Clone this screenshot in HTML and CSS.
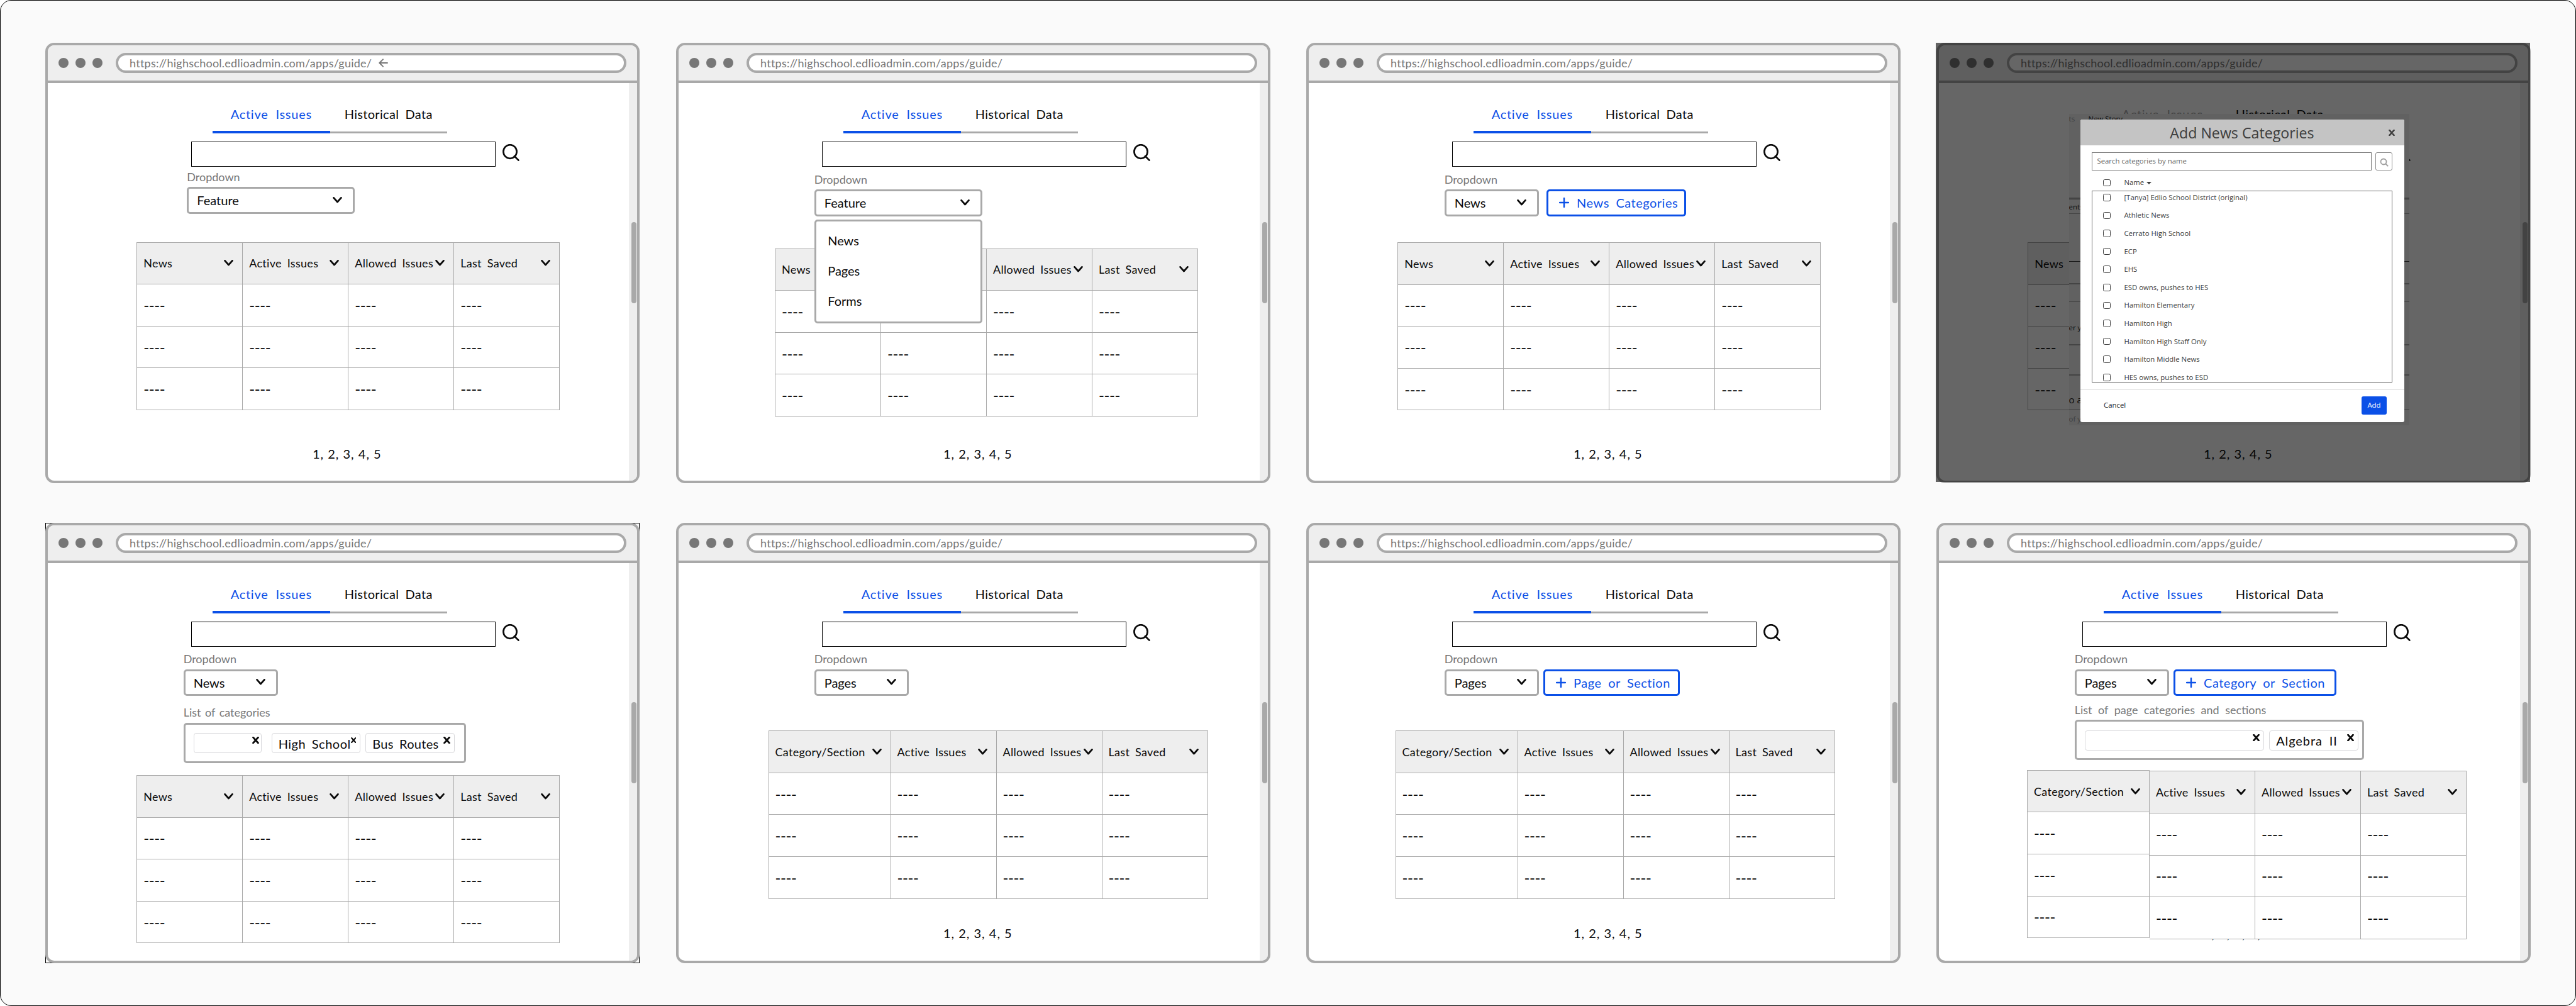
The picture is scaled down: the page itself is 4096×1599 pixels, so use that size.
FILE: index.html
```html
<!DOCTYPE html>
<html lang="en">
<head>
    <meta charset="UTF-8">
    <title>Issues Wireframes</title>
    <link rel="stylesheet" href="styles.css">
</head>
<body>
    <!-- shared icons -->
    <svg class="sprite">
        <symbol id="chevron" viewBox="0 0 15 10"><path d="M1.6 1.4 7.5 8 13.4 1.4" fill="none" stroke="currentColor" stroke-width="2.8" stroke-linecap="round" stroke-linejoin="round"/></symbol>
        <symbol id="search" viewBox="0 0 27 27"><ellipse cx="12" cy="12" rx="10.6" ry="10.8" fill="none" stroke="currentColor" stroke-width="2.7"/><path d="M19 19.3 25.4 25.6" stroke="currentColor" stroke-width="2.7" stroke-linecap="round"/></symbol>
        <symbol id="plus" viewBox="0 0 16 16"><path d="M8 1v14M1 8h14" stroke="currentColor" stroke-width="2.4" stroke-linecap="round"/></symbol>
        <symbol id="close" viewBox="0 0 11 11"><path d="M1.5 1 9.5 10M9.5 1 1.5 10" stroke="currentColor" stroke-width="2.7" stroke-linecap="round"/></symbol>
        <symbol id="back" viewBox="0 0 15 14"><path d="M14 7H1.5M7 1.3 1.3 7 7 12.7" fill="none" stroke="currentColor" stroke-width="1.9" stroke-linecap="round" stroke-linejoin="round"/></symbol>
    </svg>

    <main class="board">

        <!-- 1. Feature -->
        <section class="window">
            <header class="topbar">
                <i class="dot"></i><i class="dot"></i><i class="dot"></i>
                <div class="url"><span>https://highschool.edlioadmin.com/apps/guide/</span><svg class="back"><use href="#back"/></svg></div>
            </header>
            <div class="page page-feature">
                <nav class="tabs"><a class="tab active">Active Issues</a><a class="tab">Historical Data</a></nav>
                <div class="search"><div class="search-input"></div><svg><use href="#search"/></svg></div>
                <div class="field">
                    <div class="label">Dropdown</div>
                    <div class="row"><div class="select wide"><span>Feature</span><svg><use href="#chevron"/></svg></div></div>
                </div>
                <div class="issues">
                    <div class="head"><span>News</span><svg><use href="#chevron"/></svg></div>
                    <div class="head"><span>Active Issues</span><svg><use href="#chevron"/></svg></div>
                    <div class="head"><span>Allowed Issues</span><svg><use href="#chevron"/></svg></div>
                    <div class="head"><span>Last Saved</span><svg><use href="#chevron"/></svg></div>
                    <div>----</div><div>----</div><div>----</div><div>----</div>
                    <div>----</div><div>----</div><div>----</div><div>----</div>
                    <div>----</div><div>----</div><div>----</div><div>----</div>
                </div>
                <div class="pages">1, 2, 3, 4, 5</div>
            </div>
            <div class="scrollbar"><div class="thumb"></div></div>
        </section>

        <!-- 2. Feature, menu open -->
        <section class="window">
            <header class="topbar">
                <i class="dot"></i><i class="dot"></i><i class="dot"></i>
                <div class="url"><span>https://highschool.edlioadmin.com/apps/guide/</span></div>
            </header>
            <div class="page page-menu">
                <nav class="tabs"><a class="tab active">Active Issues</a><a class="tab">Historical Data</a></nav>
                <div class="search"><div class="search-input"></div><svg><use href="#search"/></svg></div>
                <div class="field">
                    <div class="label">Dropdown</div>
                    <div class="row">
                        <div class="select wide"><span>Feature</span><svg><use href="#chevron"/></svg></div>
                        <div class="menu">
                            <div>News</div>
                            <div>Pages</div>
                            <div>Forms</div>
                        </div>
                    </div>
                </div>
                <div class="issues">
                    <div class="head"><span>News</span></div>
                    <div class="head"></div>
                    <div class="head"><span>Allowed Issues</span><svg><use href="#chevron"/></svg></div>
                    <div class="head"><span>Last Saved</span><svg><use href="#chevron"/></svg></div>
                    <div>----</div><div></div><div>----</div><div>----</div>
                    <div>----</div><div>----</div><div>----</div><div>----</div>
                    <div>----</div><div>----</div><div>----</div><div>----</div>
                </div>
                <div class="pages">1, 2, 3, 4, 5</div>
            </div>
            <div class="scrollbar"><div class="thumb"></div></div>
        </section>

        <!-- 3. News -->
        <section class="window">
            <header class="topbar">
                <i class="dot"></i><i class="dot"></i><i class="dot"></i>
                <div class="url"><span>https://highschool.edlioadmin.com/apps/guide/</span></div>
            </header>
            <div class="page page-news">
                <nav class="tabs"><a class="tab active">Active Issues</a><a class="tab">Historical Data</a></nav>
                <div class="search"><div class="search-input"></div><svg><use href="#search"/></svg></div>
                <div class="field">
                    <div class="label">Dropdown</div>
                    <div class="row">
                        <div class="select"><span>News</span><svg><use href="#chevron"/></svg></div>
                        <div class="add add-news"><svg><use href="#plus"/></svg><span>News Categories</span></div>
                    </div>
                </div>
                <div class="issues">
                    <div class="head"><span>News</span><svg><use href="#chevron"/></svg></div>
                    <div class="head"><span>Active Issues</span><svg><use href="#chevron"/></svg></div>
                    <div class="head"><span>Allowed Issues</span><svg><use href="#chevron"/></svg></div>
                    <div class="head"><span>Last Saved</span><svg><use href="#chevron"/></svg></div>
                    <div>----</div><div>----</div><div>----</div><div>----</div>
                    <div>----</div><div>----</div><div>----</div><div>----</div>
                    <div>----</div><div>----</div><div>----</div><div>----</div>
                </div>
                <div class="pages">1, 2, 3, 4, 5</div>
            </div>
            <div class="scrollbar"><div class="thumb"></div></div>
        </section>

        <!-- 4. Add News Categories modal -->
        <section class="window">
            <header class="topbar">
                <i class="dot"></i><i class="dot"></i><i class="dot"></i>
                <div class="url"><span>https://highschool.edlioadmin.com/apps/guide/</span></div>
            </header>
            <div class="page page-modal">
                <nav class="tabs"><a class="tab active">Active Issues</a><a class="tab">Historical Data</a></nav>
                <div class="search"><div class="search-input"></div><svg><use href="#search"/></svg></div>
                <div class="issues">
                    <div class="head"><span>News</span></div>
                    <div>----</div>
                    <div>----</div>
                    <div>----</div>
                </div>
                <div class="pages">1, 2, 3, 4, 5</div>
            </div>
            <div class="scrollbar"><div class="thumb"></div></div>
            <div class="overlay"></div>
            <div class="backdrop">
                <div class="strip s-top"><span class="muted">ts</span><span class="story">New Story</span></div>
                <div class="strip s-line"></div>
                <div class="strip s-ents">ents</div>
                <div class="strip s-a"></div>
                <div class="strip s-b"></div>
                <div class="strip s-c"></div>
                <div class="strip s-er">er y</div>
                <div class="strip s-d"></div>
                <div class="strip s-oa">o a</div>
                <div class="strip s-of">of y</div>
            </div>
            <div class="modal">
                <div class="modal-head"><h2>Add News Categories</h2><svg><use href="#close"/></svg></div>
                <div class="modal-body">
                    <div class="modal-search">
                        <div class="modal-input">Search categories by name</div>
                        <div class="modal-go"><svg viewBox="0 0 14 14"><circle cx="6" cy="6" r="4.5" fill="none" stroke="#a0a0a0" stroke-width="1.8"/><path d="M9.5 9.5 12.6 12.6" stroke="#a0a0a0" stroke-width="2" stroke-linecap="round"/></svg></div>
                    </div>
                    <div class="item item-head"><i class="box"></i>Name<i class="caret"></i></div>
                    <div class="list">
                        <div class="item"><i class="box"></i>[Tanya] Edlio School District (original)</div>
                        <div class="item"><i class="box"></i>Athletic News</div>
                        <div class="item"><i class="box"></i>Cerrato High School</div>
                        <div class="item"><i class="box"></i>ECP</div>
                        <div class="item"><i class="box"></i>EHS</div>
                        <div class="item"><i class="box"></i>ESD owns, pushes to HES</div>
                        <div class="item"><i class="box"></i>Hamilton Elementary</div>
                        <div class="item"><i class="box"></i>Hamilton High</div>
                        <div class="item"><i class="box"></i>Hamilton High Staff Only</div>
                        <div class="item"><i class="box"></i>Hamilton Middle News</div>
                        <div class="item"><i class="box"></i>HES owns, pushes to ESD</div>
                    </div>
                </div>
                <div class="modal-foot"><span>Cancel</span><span class="modal-add">Add</span></div>
            </div>
        </section>

        <!-- 5. News with categories -->
        <section class="window selected">
            <header class="topbar">
                <i class="dot"></i><i class="dot"></i><i class="dot"></i>
                <div class="url"><span>https://highschool.edlioadmin.com/apps/guide/</span></div>
            </header>
            <div class="page page-news-list">
                <nav class="tabs"><a class="tab active">Active Issues</a><a class="tab">Historical Data</a></nav>
                <div class="search"><div class="search-input"></div><svg><use href="#search"/></svg></div>
                <div class="field">
                    <div class="label">Dropdown</div>
                    <div class="row"><div class="select"><span>News</span><svg><use href="#chevron"/></svg></div></div>
                </div>
                <div class="field chosen">
                    <div class="label">List of categories</div>
                    <div class="chips chips-news">
                        <div class="chip chip-empty"><svg><use href="#close"/></svg></div>
                        <div class="chip chip-tight"><span>High School</span><svg><use href="#close"/></svg></div>
                        <div class="chip"><span>Bus Routes</span><svg><use href="#close"/></svg></div>
                    </div>
                </div>
                <div class="issues">
                    <div class="head"><span>News</span><svg><use href="#chevron"/></svg></div>
                    <div class="head"><span>Active Issues</span><svg><use href="#chevron"/></svg></div>
                    <div class="head"><span>Allowed Issues</span><svg><use href="#chevron"/></svg></div>
                    <div class="head"><span>Last Saved</span><svg><use href="#chevron"/></svg></div>
                    <div>----</div><div>----</div><div>----</div><div>----</div>
                    <div>----</div><div>----</div><div>----</div><div>----</div>
                    <div>----</div><div>----</div><div>----</div><div>----</div>
                </div>
            </div>
            <div class="scrollbar"><div class="thumb"></div></div>
        </section>

        <!-- 6. Pages -->
        <section class="window">
            <header class="topbar">
                <i class="dot"></i><i class="dot"></i><i class="dot"></i>
                <div class="url"><span>https://highschool.edlioadmin.com/apps/guide/</span></div>
            </header>
            <div class="page page-pages">
                <nav class="tabs"><a class="tab active">Active Issues</a><a class="tab">Historical Data</a></nav>
                <div class="search"><div class="search-input"></div><svg><use href="#search"/></svg></div>
                <div class="field">
                    <div class="label">Dropdown</div>
                    <div class="row"><div class="select"><span>Pages</span><svg><use href="#chevron"/></svg></div></div>
                </div>
                <div class="issues sections">
                    <div class="head"><span>Category/Section</span><svg><use href="#chevron"/></svg></div>
                    <div class="head"><span>Active Issues</span><svg><use href="#chevron"/></svg></div>
                    <div class="head"><span>Allowed Issues</span><svg><use href="#chevron"/></svg></div>
                    <div class="head"><span>Last Saved</span><svg><use href="#chevron"/></svg></div>
                    <div>----</div><div>----</div><div>----</div><div>----</div>
                    <div>----</div><div>----</div><div>----</div><div>----</div>
                    <div>----</div><div>----</div><div>----</div><div>----</div>
                </div>
                <div class="pages">1, 2, 3, 4, 5</div>
            </div>
            <div class="scrollbar"><div class="thumb"></div></div>
        </section>

        <!-- 7. Pages, add page or section -->
        <section class="window">
            <header class="topbar">
                <i class="dot"></i><i class="dot"></i><i class="dot"></i>
                <div class="url"><span>https://highschool.edlioadmin.com/apps/guide/</span></div>
            </header>
            <div class="page page-pages page-add">
                <nav class="tabs"><a class="tab active">Active Issues</a><a class="tab">Historical Data</a></nav>
                <div class="search"><div class="search-input"></div><svg><use href="#search"/></svg></div>
                <div class="field">
                    <div class="label">Dropdown</div>
                    <div class="row">
                        <div class="select"><span>Pages</span><svg><use href="#chevron"/></svg></div>
                        <div class="add add-page"><svg><use href="#plus"/></svg><span>Page or Section</span></div>
                    </div>
                </div>
                <div class="issues sections">
                    <div class="head"><span>Category/Section</span><svg><use href="#chevron"/></svg></div>
                    <div class="head"><span>Active Issues</span><svg><use href="#chevron"/></svg></div>
                    <div class="head"><span>Allowed Issues</span><svg><use href="#chevron"/></svg></div>
                    <div class="head"><span>Last Saved</span><svg><use href="#chevron"/></svg></div>
                    <div>----</div><div>----</div><div>----</div><div>----</div>
                    <div>----</div><div>----</div><div>----</div><div>----</div>
                    <div>----</div><div>----</div><div>----</div><div>----</div>
                </div>
                <div class="pages">1, 2, 3, 4, 5</div>
            </div>
            <div class="scrollbar"><div class="thumb"></div></div>
        </section>

        <!-- 8. Pages with categories and sections -->
        <section class="window">
            <header class="topbar">
                <i class="dot"></i><i class="dot"></i><i class="dot"></i>
                <div class="url"><span>https://highschool.edlioadmin.com/apps/guide/</span></div>
            </header>
            <div class="page page-pages-list">
                <nav class="tabs"><a class="tab active">Active Issues</a><a class="tab">Historical Data</a></nav>
                <div class="search"><div class="search-input"></div><svg><use href="#search"/></svg></div>
                <div class="field">
                    <div class="label">Dropdown</div>
                    <div class="row">
                        <div class="select"><span>Pages</span><svg><use href="#chevron"/></svg></div>
                        <div class="add add-category"><svg><use href="#plus"/></svg><span>Category or Section</span></div>
                    </div>
                </div>
                <div class="field chosen">
                    <div class="label label-long">List of page categories and sections</div>
                    <div class="chips chips-pages">
                        <div class="chip chip-long"><svg><use href="#close"/></svg></div>
                        <div class="chip chip-algebra"><span>Algebra II</span><svg><use href="#close"/></svg></div>
                    </div>
                </div>
                <div class="split">
                    <div class="issues col-category">
                        <div class="head"><span>Category/Section</span><svg><use href="#chevron"/></svg></div>
                        <div>----</div>
                        <div>----</div>
                        <div>----</div>
                    </div>
                    <div class="issues col-rest">
                        <div class="head"><span>Active Issues</span><svg><use href="#chevron"/></svg></div>
                        <div class="head"><span>Allowed Issues</span><svg><use href="#chevron"/></svg></div>
                        <div class="head"><span>Last Saved</span><svg><use href="#chevron"/></svg></div>
                        <div>----</div><div>----</div><div>----</div>
                        <div>----</div><div>----</div><div>----</div>
                        <div>----</div><div>----</div><div>----</div>
                    </div>
                </div>
                <div class="pages">1, 2, 3, 4, 5</div>
            </div>
            <div class="scrollbar"><div class="thumb"></div></div>
        </section>

    </main>
</body>
</html>
```
FILE: styles.css
```css
* {
    margin: 0;
    padding: 0;
    box-sizing: border-box;
}

body {
    font-family: Lato, sans-serif;
    font-size: 20px;
    line-height: 24px;
    color: #0a0a0a;
    background-color: #fff;
    white-space: nowrap;
}

.sprite {
    display: none;
}

.board {
    position: relative;
    z-index: 0;
    width: 4096px;
    height: 1599px;
    padding: 67px 0 0 71px;
    border: 1px solid #000;
    border-radius: 18px;
    background-color: #fafafa;
    display: grid;
    grid-template-columns: 1003px 1002px 1002px 945px;
    grid-template-rows: 762.5px 700px;
}

/* browser window */
.window {
    position: relative;
    width: 945px;
    height: 700px;
    border: 4px solid #a9a9a9;
    border-radius: 14px;
    background-color: #fff;
    display: grid;
    grid-template-columns: 924px 13px;
    grid-template-rows: 60px 632px;
}

/* square selection frame behind the rounded corners */
.selected::before {
    content: "";
    position: absolute;
    inset: -4px;
    border: 1px solid #000;
    z-index: -1;
}

.topbar {
    grid-column: 1 / 3;
    display: flex;
    align-items: center;
    gap: 10.7px;
    padding-left: 17.3px;
    border-bottom: 4px solid #a9a9a9;
    border-radius: 10px 10px 0 0;
    background-color: #eee;
}

.dot {
    width: 16px;
    height: 16px;
    border-radius: 50%;
    background-color: #777;
}

.url {
    width: 812px;
    height: 32px;
    margin-left: 10.7px;
    padding-left: 18px;
    border: 4px solid #a9a9a9;
    border-radius: 16px;
    background-color: #fff;
    display: flex;
    align-items: center;
    font-size: 18px;
    letter-spacing: 0.25px;
    color: #777;
}

.back {
    width: 15px;
    height: 14px;
    margin-left: 11px;
}

.page {
    display: flex;
    flex-direction: column;
    align-items: flex-start;
}

.scrollbar {
    background-color: #eee;
    border-radius: 0 0 10px 0;
    padding: 221px 0 0 4px;
}

.thumb {
    width: 8px;
    height: 129px;
    border-radius: 4px;
    background-color: #a9a9a9;
}

/* tabs */
.tabs {
    display: flex;
    align-items: flex-end;
    width: 373px;
    margin: 37px 0 0 262px;
    line-height: 22px;
}

.tab {
    width: 50%;
    height: 42px;
    text-align: center;
    border-bottom: 3px solid #a9a9a9;
    letter-spacing: 0.3px;
    word-spacing: 5px;
}

.tab.active {
    height: 43px;
    padding-top: 1px;
    color: #0b50e7;
    border-bottom: 4px solid #0b50e7;
    letter-spacing: 0.75px;
    word-spacing: 6px;
}

.search {
    display: flex;
    gap: 11px;
    margin: 13px 0 0 228px;
}

.search-input {
    width: 484px;
    height: 40px;
    border: 1px solid #000;
}

.search svg {
    width: 27px;
    height: 27px;
    margin-top: 4px;
}

/* dropdown */
.field {
    margin: 9.5px 0 0 215.7px;
}

.label {
    margin-bottom: 6.5px;
    font-size: 18px;
    line-height: 20px;
    color: #777;
    word-spacing: 2px;
}

.label-long {
    word-spacing: 5px;
}

.row {
    position: relative;
    display: flex;
    gap: 7.4px;
}

.select,
.add {
    height: 42.7px;
    border: 3px solid #a9a9a9;
    border-radius: 5px;
    background-color: #fff;
    display: flex;
    align-items: center;
}

.select {
    width: 150px;
    padding: 0 17px 0 13px;
    justify-content: space-between;
}

.select.wide {
    width: 267px;
}

.select svg,
.head svg {
    width: 15px;
    height: 10px;
}

.select svg {
    margin-top: -1px;
}

.add {
    gap: 12.5px;
    padding-left: 16.5px;
    border-color: #0b50e7;
    color: #0b50e7;
    letter-spacing: 0.5px;
    word-spacing: 5px;
}

.add svg {
    width: 16px;
    height: 16px;
}

.add-news {
    width: 222px;
    margin-left: 5px;
}

.add-page {
    width: 217px;
}

.add-category {
    width: 259px;
}

.menu {
    position: absolute;
    left: 0;
    top: 48.3px;
    z-index: 2;
    width: 267px;
    height: 164.5px;
    padding: 17.5px 0 0 18.5px;
    border: 3px solid #a9a9a9;
    border-radius: 5px;
    background-color: #fff;
}

.menu div {
    height: 48px;
}

/* chosen categories */
.chips {
    height: 64px;
    padding: 13.5px 0 0 13.5px;
    border: 3px solid #a9a9a9;
    border-radius: 5px;
    display: flex;
    gap: 8px;
}

.chips-news {
    width: 449.4px;
}

.chips-pages {
    width: 460px;
}

.chip {
    width: 141.5px;
    height: 32px;
    padding: 1px 6px 0 10px;
    border: 1px solid #d9d9dc;
    border-radius: 4px;
    display: flex;
    justify-content: space-between;
    align-items: center;
    letter-spacing: 0.3px;
    word-spacing: 4px;
}

.chip svg {
    width: 11px;
    height: 11px;
    margin: -10px 0 0 auto;
}

.chip-tight {
    letter-spacing: 0.5px;
}

.chip-algebra {
    letter-spacing: 0.9px;
    word-spacing: 5px;
}

.chip-empty {
    width: 108px;
    padding-right: 3px;
    margin-right: 7.5px;
}

.chip-long {
    width: 285px;
}

/* issues table */
.issues {
    position: relative;
    z-index: 1;
    display: grid;
    grid-template-columns: repeat(4, 168px);
    grid-auto-rows: 66.6px;
    margin-left: 141.2px;
    border: solid #a9a9a9;
    border-width: 1px 0 0 1px;
    background-color: #fff;
    font-size: 24px;
}

.issues div {
    display: flex;
    align-items: center;
    padding: 0 0 0 10px;
    border: solid #a9a9a9;
    border-width: 0 1px 1px 0;
    letter-spacing: -0.4px;
}

.issues .head {
    justify-content: space-between;
    padding: 0 14px 0 10px;
    background-color: #eee;
    font-size: 18px;
    letter-spacing: 0.3px;
    word-spacing: 4px;
}

.head svg {
    flex: none;
}

.issues.sections {
    grid-template-columns: 194px repeat(3, 168px);
}

.split {
    display: flex;
    position: relative;
    z-index: 1;
}

.issues.col-category {
    grid-template-columns: 194px;
    margin: 0;
    align-self: flex-start;
}

.issues.col-rest {
    grid-template-columns: repeat(3, 168px);
    margin: 1.5px 0 0 0;
    border-left: 0;
}

.pages {
    margin: auto auto 31.5px 421px;
    letter-spacing: 1px;
}

/* per screen spacing */
.page-feature .field { margin: 5.5px 0 0 221.3px; }
.page-feature .issues { margin-top: 45px; }
.page-menu .issues { margin: 51px 0 0 153px; }
.page-news .issues { margin-top: 41.3px; }
.page-modal .issues { margin-top: 120px; grid-template-columns: 168px; }
.page-modal .tab.active { color: #aaa; }
.page-news-list .chosen { margin-top: 16.3px; }
.page-news-list .issues { margin-top: 19px; }
.page-pages .issues { margin: 55px 0 0 142.5px; }
.page-add .issues { margin-left: 137.5px; }
.page-pages-list .chosen { margin-top: 11.7px; }
.page-pages-list .split { margin: 15.5px 0 0 140px; }
.page-pages-list .pages { margin-top: -21px; margin-bottom: 0; }

/* dimmed screen */
.overlay {
    position: absolute;
    left: -5px;
    top: -4px;
    width: 945px;
    height: 698px;
    z-index: 2;
    background-color: rgba(0, 0, 0, 0.6);
}

.backdrop {
    position: absolute;
    left: 206.6px;
    top: 109.3px;
    z-index: 3;
    width: 541px;
    height: 495px;
    overflow: hidden;
    background-color: #616161;
    font-family: "Open Sans", sans-serif;
    font-size: 11.4px;
    line-height: 14px;
    color: #0a0a0a;
}

.strip {
    border: 0 solid #444;
}

.s-top { display: flex; height: 133px; padding-top: 1px; }
.s-top .muted { width: 31px; color: #3c3c3c; }
.s-line { height: 4px; border-width: 2px 0 1px; }
.s-ents { height: 22px; padding-top: 4px; border-bottom-width: 1px; }
.s-a { height: 76px; border-bottom: 1px solid #111; }
.s-b { height: 36px; border-bottom-width: 2px; }
.s-c { height: 28px; border-bottom-width: 1px; }
.s-er { height: 69px; padding-top: 34px; border-bottom-width: 2px; }
.s-d { height: 48px; border-bottom-width: 2px; }
.s-oa { height: 54px; padding-top: 31px; border-bottom-width: 1px; font-size: 15px; }
.s-of { padding-top: 8px; color: #3c3c3c; }

.modal {
    position: absolute;
    left: 225px;
    top: 118.3px;
    z-index: 4;
    width: 514.5px;
    height: 481px;
    border-radius: 3px;
    overflow: hidden;
    background-color: #fff;
    font-family: "Open Sans", sans-serif;
    font-size: 11.4px;
    line-height: 16px;
    color: #3d3d3d;
}

.modal-head {
    display: flex;
    align-items: center;
    height: 40.7px;
    padding: 0 14.5px 0 24px;
    background-color: #c4c4c4;
}

.modal-head h2 {
    flex: 1;
    text-align: center;
    font-size: 23.2px;
    font-weight: 400;
    line-height: 32px;
}

.modal-head svg {
    width: 10px;
    height: 10px;
}

.modal-body {
    height: 388px;
    padding: 11.3px 18.8px 0 18.4px;
    border-bottom: 1px solid #ccc;
}

.modal-search {
    display: flex;
    gap: 5.7px;
}

.modal-input {
    width: 444.6px;
    height: 28.3px;
    padding: 5px 0 0 7px;
    border: 1px solid #7a7a7a;
    color: #666;
}

.modal-go {
    width: 27px;
    height: 28.7px;
    padding: 8px 0 0 6px;
    border: 1px solid #8a8a8a;
    border-radius: 3px;
}

.modal-go svg {
    display: block;
    width: 14px;
    height: 14px;
}

.item {
    display: flex;
    align-items: center;
    height: 28.6px;
    padding-left: 17px;
}

.item-head {
    margin-top: 5px;
    padding-left: 18px;
}

.box {
    width: 11.5px;
    height: 11.5px;
    margin-right: 21.5px;
    border: 1px solid #3d3d3d;
    border-radius: 2.5px;
}

.caret {
    margin: 2px 0 0 4px;
    border: 4px solid transparent;
    border-top: 4.5px solid #3d3d3d;
    border-bottom: 0;
}

.list {
    height: 305px;
    margin-top: -2px;
    overflow: hidden;
    border: 1px solid #6a6a6a;
}

.list .item:first-child {
    margin-top: -4px;
}

.modal-foot {
    display: flex;
    justify-content: space-between;
    align-items: center;
    height: 51px;
    padding: 0 27.5px 0 37px;
    color: #222;
}

.modal-add {
    width: 40px;
    height: 28.3px;
    border-radius: 3px;
    background-color: #0b50e7;
    color: #fff;
    line-height: 28px;
    text-align: center;
}
```
